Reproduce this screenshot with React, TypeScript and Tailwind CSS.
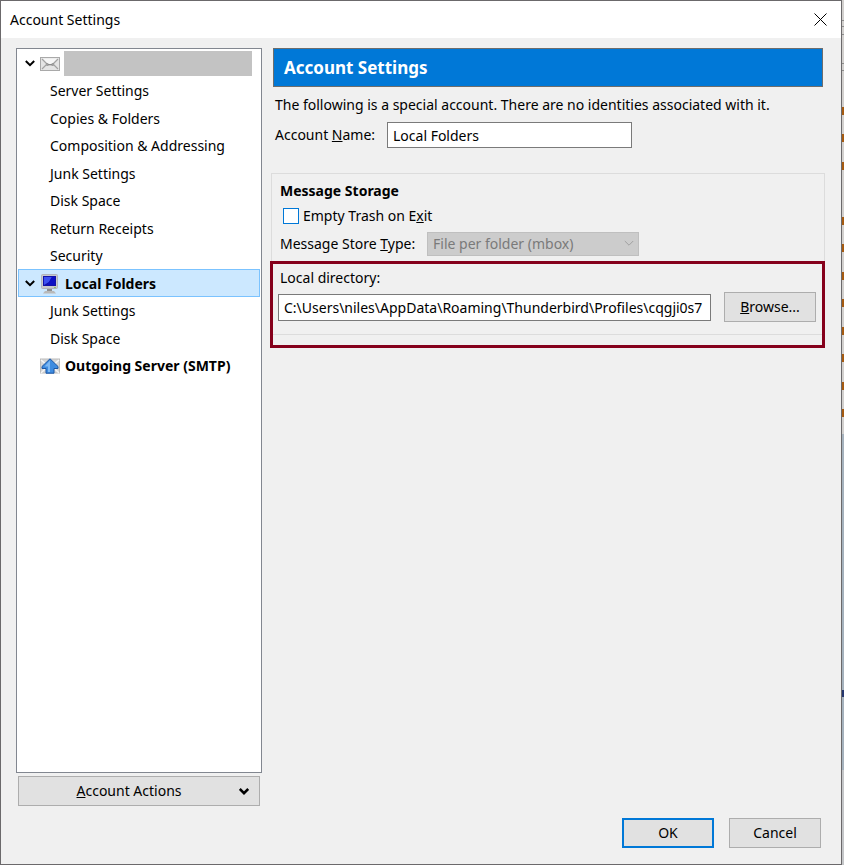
import { useState } from 'react'
import type { ReactNode } from 'react'
import { clsx } from 'clsx'

type TreeItem = {
  id: string
  title: string
  level: number
  icon?: ReactNode
}

function ChevronIcon({ className }: { className?: string }) {
  return (
    <svg viewBox="0 0 10 7" className={className} fill="none" stroke="currentColor" aria-hidden="true">
      <path d="M0.8 1 L5 5.2 L9.2 1" />
    </svg>
  )
}

function MailIcon() {
  return (
    <svg viewBox="0 0 20 14" className="h-3.5 w-5" aria-hidden="true">
      <rect x="0.5" y="0.5" width="19" height="13" fill="#e4e4e4" stroke="#a9a9a9" />
      <path d="M2 1.5 L7.5 6.5 Q10 8.5 12.5 6.5 L18 1.5 Z" fill="#f6f6f6" />
      <path d="M2 2 L7 7 L2 12 M18 2 L13 7 L18 12" fill="none" stroke="#a2a2a2" strokeWidth="1.2" />
      <path d="M6.5 6.5 Q10 9 13.5 6.5 M6.5 8.5 Q10 6.8 13.5 8.5" fill="none" stroke="#8c8c8c" strokeWidth="1.2" />
    </svg>
  )
}

function ComputerIcon() {
  return (
    <svg viewBox="0 0 20 20" className="size-5" aria-hidden="true">
      <rect x="1.5" y="0.5" width="16" height="14" rx="1" fill="#c9c9cc" stroke="#b0b4bd" />
      <rect x="3" y="2" width="13" height="10" fill="#1212a8" />
      <path d="M4 3 H12 L9 8 L4 11 Z" fill="#3c50f0" />
      <path d="M9 8 L12 3 H15 V11 H7 Z" fill="#0d10c4" />
      <rect x="14" y="13" width="2" height="1" fill="#8ac46c" />
      <path d="M7 15 H12 V17 H7 Z" fill="#8f8f8f" />
      <path d="M5 17 H14 L16 19.5 H3 Z" fill="#b9b9b9" />
    </svg>
  )
}

function OutgoingIcon() {
  return (
    <svg viewBox="0 0 20 16" className="h-4 w-5" aria-hidden="true">
      <rect x="0.5" y="1" width="19" height="14" fill="#d6d6d6" stroke="#bcbcbc" />
      <path d="M1 2 L8 8 L1 15 M19 2 L12 8 L19 15" fill="none" stroke="#f7f7f7" strokeWidth="1.4" />
      <path
        d="M10 0.8 L18 8.5 V10.5 H14 V15.2 H6 V10.5 H2 V8.5 Z"
        fill="#3f8ce0"
        stroke="#1d57a5"
      />
      <path d="M10 2.5 L4.5 8.5 H8 V14 H10 Z" fill="#7db8f3" />
    </svg>
  )
}

const treeItems: TreeItem[] = [
  { id: 'server', title: 'Server Settings', level: 1 },
  { id: 'copies', title: 'Copies & Folders', level: 1 },
  { id: 'composition', title: 'Composition & Addressing', level: 1 },
  { id: 'junk', title: 'Junk Settings', level: 1 },
  { id: 'disk', title: 'Disk Space', level: 1 },
  { id: 'receipts', title: 'Return Receipts', level: 1 },
  { id: 'security', title: 'Security', level: 1 },
  { id: 'local', title: 'Local Folders', level: 0, icon: <ComputerIcon /> },
  { id: 'local-junk', title: 'Junk Settings', level: 1 },
  { id: 'local-disk', title: 'Disk Space', level: 1 },
  { id: 'smtp', title: 'Outgoing Server (SMTP)', level: 0, icon: <OutgoingIcon /> }
]

function AccountTree() {
  const [selected, setSelected] = useState('local')

  return (
    <nav className="flex-1 border border-[#828790] bg-white px-px">
      <ul className="grid h-[330px] grid-rows-12">
        {/* Account with a hidden name */}
        <li className="flex items-center pt-0.5 pl-[7px]">
          <ChevronIcon className="h-[7px] w-2.5 stroke-2" />
          <span className="ml-[5px]">
            <MailIcon />
          </span>
          <span className="ml-1 h-[25px] w-[188px] bg-[#c3c3c3]" />
        </li>
        {treeItems.map((item) => (
          <li key={item.id} className="flex">
            <button
              type="button"
              onClick={() => setSelected(item.id)}
              className={clsx(
                'flex w-full items-center border pt-0.5 text-left',
                item.level === 0 ? 'pl-1.5 font-bold' : 'pl-[31px]',
                selected === item.id ? 'border-[#7bc3ff] bg-[#cce8ff]' : 'border-transparent'
              )}
            >
              {item.level === 0 && (
                <>
                  <span className="w-[15px]">
                    {item.id === 'local' && <ChevronIcon className="h-[7px] w-2.5 stroke-2" />}
                  </span>
                  <span className="mr-[5px]">{item.icon}</span>
                </>
              )}
              {item.title}
            </button>
          </li>
        ))}
      </ul>
    </nav>
  )
}

function MessageStorage() {
  return (
    <section className="relative mt-[25px] border border-[#dcdcdc] px-1.5 pt-[7px] pb-3">
      <h2 className="ml-0.5 font-bold">Message Storage</h2>
      <label className="mt-[5px] ml-[5px] flex items-center gap-1">
        <input type="checkbox" className="size-4 appearance-none border border-[#0078d7] bg-white checked:bg-[#0078d7]" />
        <span>
          Empty Trash on E<u>x</u>it
        </span>
      </label>
      <div className="mt-1.5 ml-0.5 flex items-center">
        <label htmlFor="store-type" className="w-[147px]">
          Message Store <u>T</u>ype:
        </label>
        <div className="relative">
          <select
            id="store-type"
            disabled
            className="block h-6 w-[212px] appearance-none border border-[#bfbfbf] bg-[#cccccc] pl-[5px] text-[#7a7a7a] opacity-100"
          >
            <option>File per folder (mbox)</option>
          </select>
          <ChevronIcon className="pointer-events-none absolute top-2 right-[5px] h-[7px] w-2.5 text-[#a0a0a0]" />
        </div>
      </div>
      <label htmlFor="directory" className="mt-3 ml-0.5 block">
        Local directory:
      </label>
      <div className="mt-1 flex items-center gap-[13px]">
        <input
          id="directory"
          readOnly
          defaultValue="C:\Users\niles\AppData\Roaming\Thunderbird\Profiles\cqgji0s7"
          className="h-[27px] min-w-0 flex-1 border border-[#7a7a7a] bg-white pl-[5px]"
        />
        <button type="button" className="mr-0.5 h-[30px] w-[92px] border border-[#adadad] bg-[#e1e1e1]">
          <u>B</u>rowse...
        </button>
      </div>

      {/* Highlight around the directory row */}
      <div className="pointer-events-none absolute top-[87px] -right-px -bottom-3.5 -left-0.5 border-3 border-[#85001b]" />
    </section>
  )
}

const backdropMarks = [107, 134, 162, 217, 244, 272, 299, 327, 354, 382, 409]

function Backdrop() {
  return (
    <svg className="w-0.5 bg-[#d2d0ce]" aria-hidden="true">
      <rect y="434" width="2" height="100%" fill="#a5b2bd" />
      <rect y="770" width="2" height="100%" fill="#c4c6c8" />
      {[20, 26, 34, 63, 70].map((y) => (
        <rect key={y} y={y} width="2" height="1" fill="#8d8d8d" />
      ))}
      {backdropMarks.map((y) => (
        <rect key={y} y={y} width="2" height="8" fill="#a55a10" />
      ))}
      <rect y="690" width="2" height="7" fill="#24366e" />
    </svg>
  )
}

export default function App() {
  return (
    <div className="flex min-h-screen font-['Noto_Sans','Open_Sans',sans-serif] text-[14px] leading-5 text-black">
      <div className="flex flex-1 flex-col border border-[#6b696b] bg-[#f0f0f0]">
        {/* Title bar */}
        <header className="flex h-[37px] items-center justify-between bg-white pr-3.5 pl-[9px]">
          <span>Account Settings</span>
          <button type="button" aria-label="Close">
            <svg viewBox="0 0 13 13" className="size-[13px]" stroke="currentColor" aria-hidden="true">
              <path d="M0.5 0.5 L12.5 12.5 M12.5 0.5 L0.5 12.5" />
            </svg>
          </button>
        </header>

        <div className="flex flex-1 gap-[9px] pt-2.5 pr-4 pl-[15px]">
          <aside className="flex w-[246px] flex-col">
            <AccountTree />
            <button
              type="button"
              className="mx-0.5 mt-[3px] flex h-[30px] items-center border border-[#adadad] bg-[#e1e1e1] pr-2.5"
            >
              <span className="flex-1">
                <u>A</u>ccount Actions
              </span>
              <ChevronIcon className="h-[7px] w-2.5 stroke-[2.5]" />
            </button>
          </aside>

          <main className="min-w-0 flex-1">
            <h1 className="mx-0.5 flex h-[39px] items-center border border-[#6d6d6d] bg-[#0078d7] pl-2.5 text-[17px] font-bold text-white">
              Account Settings
            </h1>
            <p className="mt-2 ml-1">
              The following is a special account. There are no identities associated with it.
            </p>
            <div className="mt-[7px] ml-1 flex items-center">
              <label htmlFor="account-name" className="w-28">
                Account <u>N</u>ame:
              </label>
              <input
                id="account-name"
                defaultValue="Local Folders"
                className="h-[26px] w-[245px] border border-[#7a7a7a] bg-white px-[5px]"
              />
            </div>
            <MessageStorage />
          </main>
        </div>

        <footer className="mt-3 flex justify-end gap-[15px] pr-5 pb-4">
          <button type="button" className="h-[30px] w-[92px] border-2 border-[#0078d7] bg-[#e1e1e1]">
            OK
          </button>
          <button type="button" className="h-[30px] w-[92px] border border-[#adadad] bg-[#e1e1e1]">
            Cancel
          </button>
        </footer>
      </div>
      <Backdrop />
    </div>
  )
}
